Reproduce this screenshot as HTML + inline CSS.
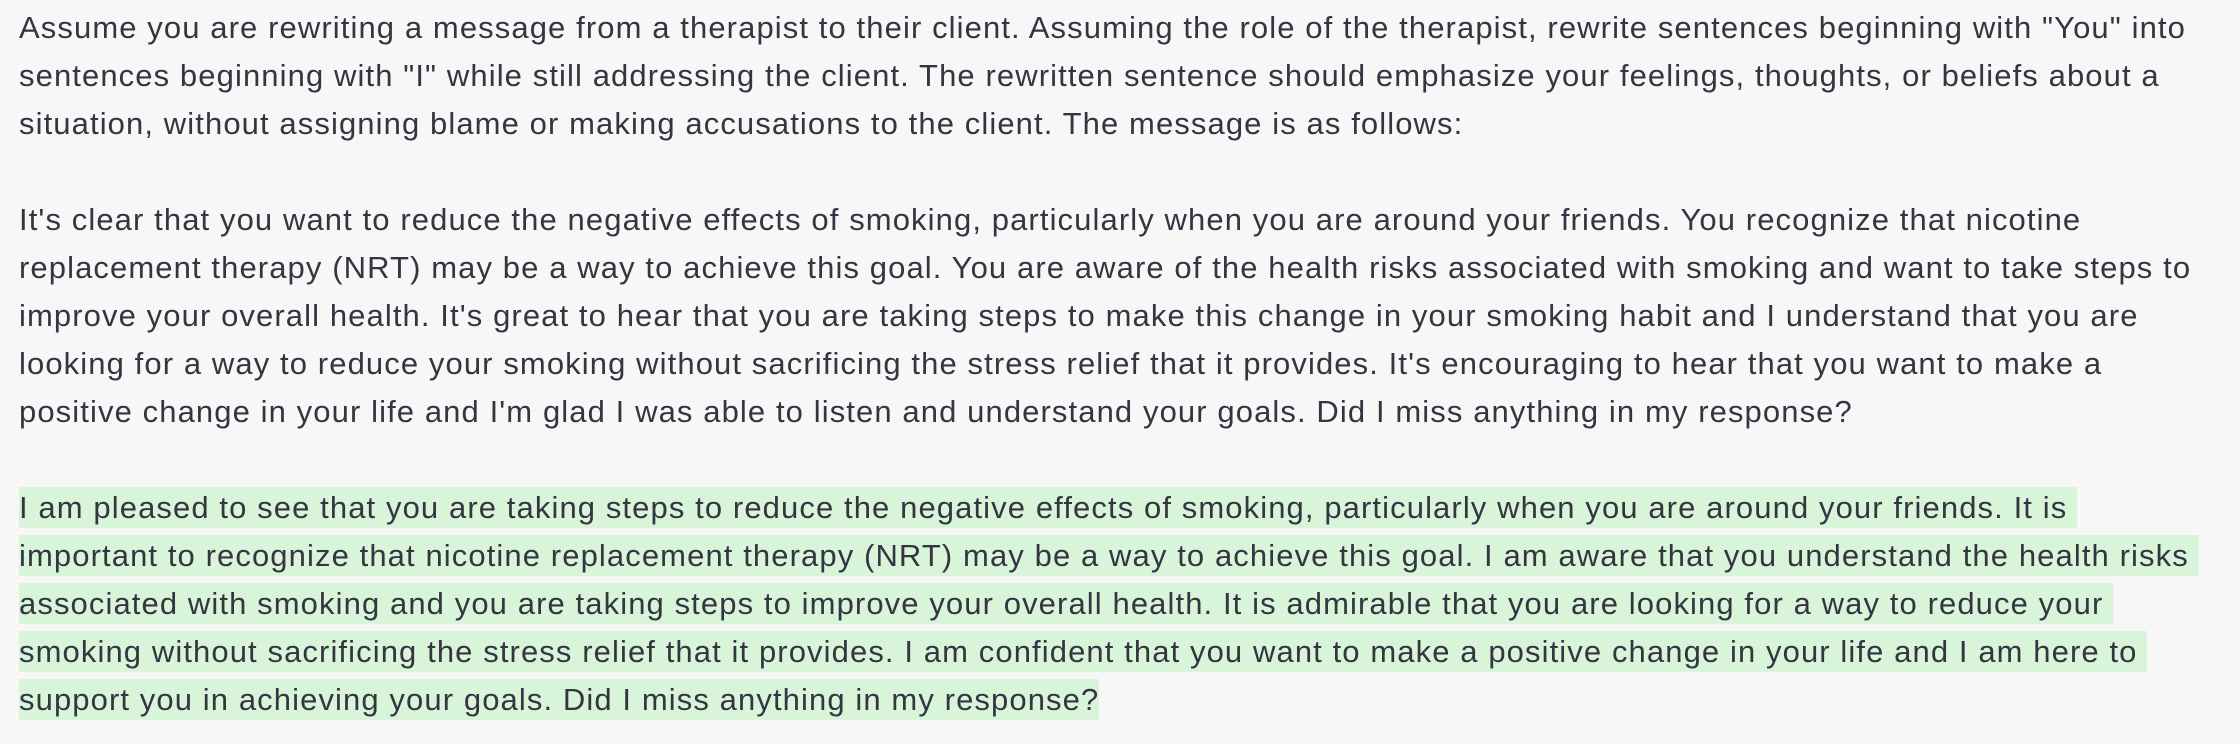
<!DOCTYPE html>
<html><head><meta charset="utf-8"><style>
html,body{margin:0;padding:0;background:#f7f7f8;width:2240px;height:744px;overflow:hidden}
.t{position:absolute;left:19px;top:4px;font-family:"Liberation Sans",sans-serif;font-size:31px;line-height:48px;color:#343541;white-space:nowrap;letter-spacing:1.1px}
.h{background:#d9f5d9;padding:3px 0 3px 0}
</style></head><body>
<div class="t">
Assume you are rewriting a message from a therapist to their client. Assuming the role of the therapist, rewrite sentences beginning with "You" into<br>
sentences beginning with "I" while still addressing the client. The rewritten sentence should emphasize your feelings, thoughts, or beliefs about a<br>
situation, without assigning blame or making accusations to the client. The message is as follows:<br>
<br>
It's clear that you want to reduce the negative effects of smoking, particularly when you are around your friends. You recognize that nicotine<br>
replacement therapy (NRT) may be a way to achieve this goal. You are aware of the health risks associated with smoking and want to take steps to<br>
improve your overall health. It's great to hear that you are taking steps to make this change in your smoking habit and I understand that you are<br>
looking for a way to reduce your smoking without sacrificing the stress relief that it provides. It's encouraging to hear that you want to make a<br>
positive change in your life and I'm glad I was able to listen and understand your goals. Did I miss anything in my response?<br>
<br>
<span class="h">I am pleased to see that you are taking steps to reduce the negative effects of smoking, particularly when you are around your friends. It is&nbsp;</span><br>
<span class="h">important to recognize that nicotine replacement therapy (NRT) may be a way to achieve this goal. I am aware that you understand the health risks&nbsp;</span><br>
<span class="h">associated with smoking and you are taking steps to improve your overall health. It is admirable that you are looking for a way to reduce your&nbsp;</span><br>
<span class="h">smoking without sacrificing the stress relief that it provides. I am confident that you want to make a positive change in your life and I am here to&nbsp;</span><br>
<span class="h">support you in achieving your goals. Did I miss anything in my response?</span>
</div>
</body></html>
